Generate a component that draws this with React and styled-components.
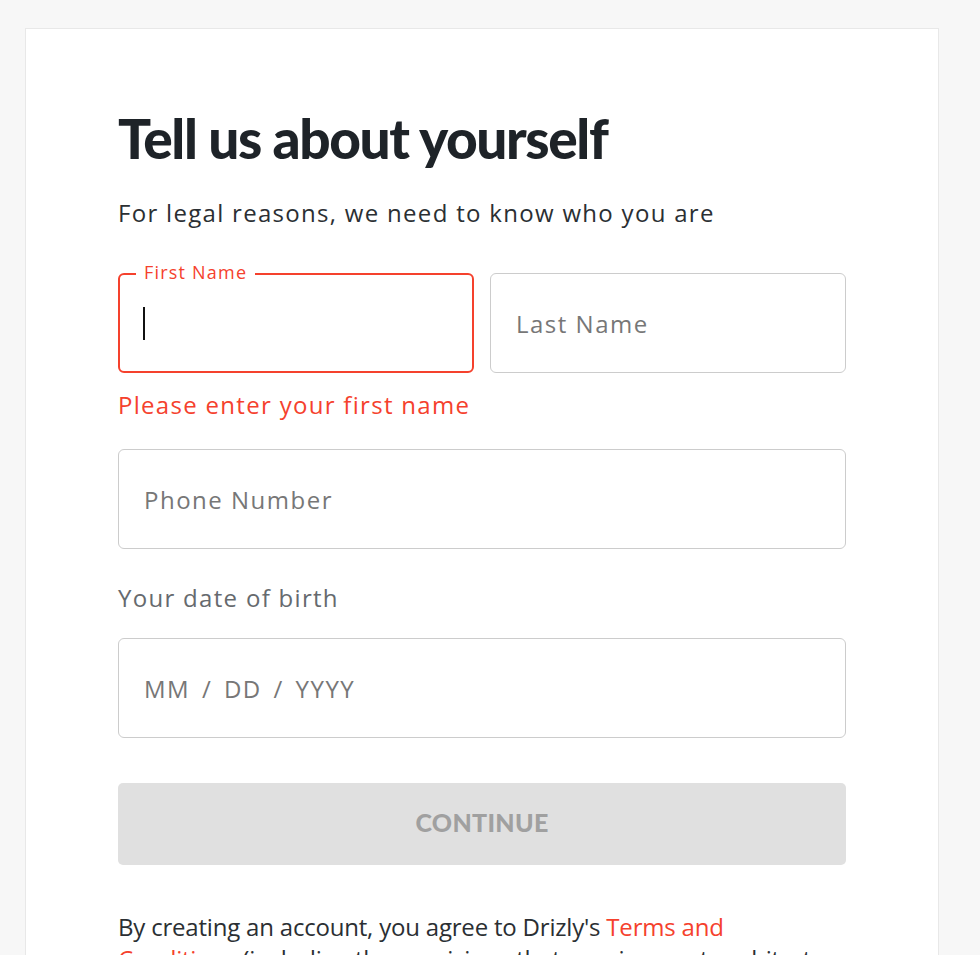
import React from "react";
import styled, { createGlobalStyle } from "styled-components";

const GlobalStyle = createGlobalStyle`
  html, body {
    margin: 0;
    padding: 0;
    background: #f7f7f7;
  }
  body {
    font-family: "Open Sans", "Liberation Sans", sans-serif;
    color: #2b2f33;
  }
  * { box-sizing: border-box; }
`;

const Page = styled.div`
  padding: 28px 41px 0 25px;
  min-height: 955px;
`;

const Card = styled.div`
  background: #fff;
  border: 1px solid #e8e8e8;
  border-bottom: none;
  padding: 81px 92px 60px 92px;
`;

const Title = styled.h1`
  margin: 0;
  font-family: Lato, "Liberation Sans", sans-serif;
  font-weight: 900;
  font-size: 55px;
  line-height: 56px;
  letter-spacing: -1.4px;
  color: #1e2328;
`;

const Subtitle = styled.p`
  margin: 31px 0 0;
  font-size: 24px;
  line-height: 32px;
  letter-spacing: 1.3px;
  color: #2b2f33;
`;

const Row = styled.div`
  display: grid;
  grid-template-columns: 1fr 1fr;
  gap: 16px;
  margin-top: ${(p) => p.$top || 0}px;
`;

const Field = styled.div`
  position: relative;
  margin-top: ${(p) => p.$top || 0}px;
`;

const Input = styled.input`
  display: block;
  width: 100%;
  height: 100px;
  padding: 0 25px;
  border: ${(p) => (p.$error ? "2px solid #f5412d" : "1px solid #cccccc")};
  border-radius: 6px;
  background: #fff;
  font-family: "Open Sans", "Liberation Sans", sans-serif;
  font-size: 24px;
  letter-spacing: 1.5px;
  word-spacing: ${(p) => p.$wordGap || 0}px;
  color: #2b2f33;
  outline: none;
  caret-color: transparent;

  &::placeholder {
    color: #777777;
    opacity: 1;
  }
`;

const FloatLabel = styled.label`
  position: absolute;
  top: -13px;
  left: 18px;
  padding: 0 8px;
  background: #fff;
  font-size: 18px;
  line-height: 24px;
  letter-spacing: 1.2px;
  color: #f5412d;
`;

const Caret = styled.span`
  position: absolute;
  left: 25px;
  top: 34px;
  width: 2px;
  height: 33px;
  background: #111;
`;

const ErrorText = styled.p`
  margin: 16px 0 0;
  font-size: 24px;
  line-height: 32px;
  letter-spacing: 1.3px;
  color: #f5412d;
`;

const FieldLabel = styled.p`
  margin: 33px 0 0;
  font-size: 24px;
  line-height: 32px;
  letter-spacing: 1.3px;
  color: #666a6e;
`;

const Button = styled.button`
  display: block;
  width: 100%;
  height: 82px;
  margin-top: 45px;
  padding: 0 0 5px;
  border: none;
  border-radius: 5px;
  background: #e0e0e0;
  font-family: Lato, "Liberation Sans", sans-serif;
  font-weight: 900;
  font-size: 25px;
  letter-spacing: 0.3px;
  color: #a0a0a0;
  cursor: default;
`;

const Terms = styled.p`
  margin: 46px 0 0;
  font-size: 24px;
  line-height: 32px;
  letter-spacing: -0.2px;
  color: #2b2f33;
`;

const Link = styled.a`
  color: #f5412d;
  text-decoration: none;
`;

export default function App() {
  return (
    <>
      <GlobalStyle />
      <Page>
        <Card>
          <Title>Tell us about yourself</Title>
          <Subtitle>For legal reasons, we need to know who you are</Subtitle>

          <Row $top={44}>
            <Field>
              <FloatLabel htmlFor="first">First Name</FloatLabel>
              <Input id="first" $error />
              <Caret />
            </Field>
            <Field>
              <Input placeholder="Last Name" />
            </Field>
          </Row>
          <ErrorText>Please enter your first name</ErrorText>

          <Field $top={28}>
            <Input placeholder="Phone Number" />
          </Field>

          <FieldLabel>Your date of birth</FieldLabel>
          <Field $top={24}>
            <Input placeholder="MM / DD / YYYY" $wordGap={4} />
          </Field>

          <Button disabled>CONTINUE</Button>

          <Terms>
            By creating an account, you agree to Drizly's{" "}
            <Link href="#">Terms and Conditions</Link> (including the provisions
            that require you to arbitrate disputes on an individual basis) and
            Privacy Policy.
          </Terms>
        </Card>
      </Page>
    </>
  );
}
